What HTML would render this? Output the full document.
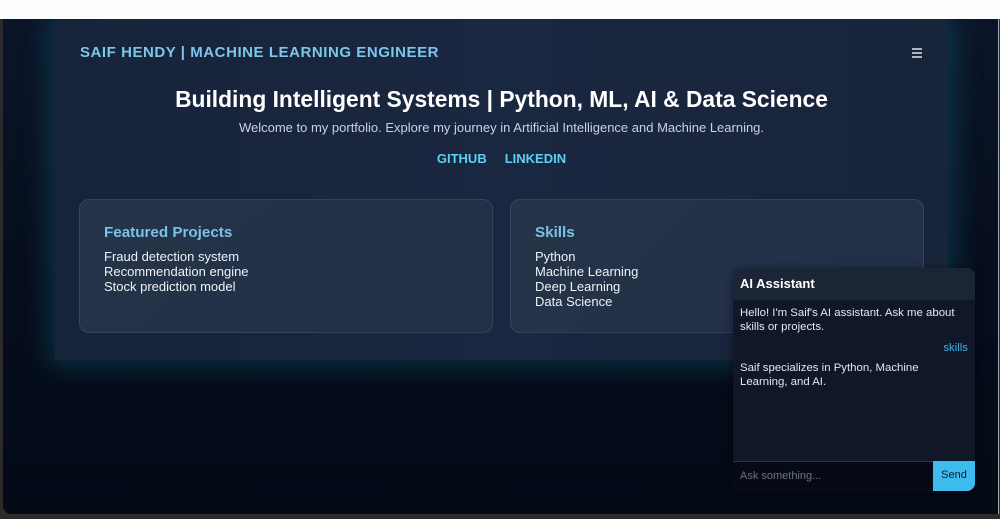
<!DOCTYPE html>
<html><head><style>
*{margin:0;padding:0;box-sizing:border-box}
body{width:1000px;height:519px;overflow:hidden;background:#2b2b2b;font-family:"Liberation Sans",Arial,sans-serif;position:relative}
.top{position:absolute;left:0;top:0;width:1000px;height:19px;background:#fbfdfe}
.frame{position:absolute;left:3px;top:19px;width:996px;height:495px;background:linear-gradient(180deg,#0b1528 0%,#060d1c 60%,#040a16 100%);border-radius:0 0 0 8px;overflow:hidden;border-right:1px solid #9aa;}
.main{position:absolute;left:52px;top:0;width:893px;height:341px;background:linear-gradient(90deg,#172339,#1a2740 50%,#18243a);box-shadow:0 0 25px 6px rgba(20,120,140,0.35);}
.brand{position:absolute;left:25px;top:25px;color:#7cc7ea;font-weight:bold;font-size:15px;letter-spacing:0.55px}
.menu{position:absolute;left:857px;top:29px;width:10px}
.menu i{display:block;height:2px;background:#aab6c6;margin-bottom:2px}
h1{position:absolute;left:0;width:100%;top:67px;text-align:center;color:#fff;font-size:22.8px;font-weight:bold}
.sub{position:absolute;left:0;width:100%;top:101px;text-align:center;color:#c9d3df;font-size:13px}
.links{position:absolute;left:0;width:100%;top:132px;text-align:center;color:#5fd0f0;font-weight:bold;font-size:13px}
.links span{margin:0 9px}
.card{position:absolute;top:180px;width:414px;height:134px;background:linear-gradient(135deg,#263449,#223048);border:1px solid #34435a;border-radius:10px;padding:24px 24px}
.card h3{color:#79c2e8;font-size:15.2px;margin-bottom:8px}
.card p{color:#eef2f6;font-size:13px;line-height:15px}
.chat{position:absolute;left:733px;top:268px;width:242px;height:223px;background:#0f1729;border-radius:8px 8px 8px 0;overflow:hidden;box-shadow:0 2px 10px rgba(0,0,0,.5)}
.ch{height:32px;background:#1b2536;color:#fff;font-weight:bold;font-size:13px;padding:8px 7px}
.msg{color:#e3e8ef;font-size:11.4px;line-height:14px;padding:0 7px}
.in{position:absolute;left:0;bottom:0;width:242px;height:30px;background:#050a16;border-top:1px solid #2a3446;color:#6b7383;font-size:11px;padding:8px 7px}
.send{position:absolute;right:0;bottom:0;width:42px;height:30px;background:#3fbcee;color:#0c1a2a;font-size:11px;text-align:center;line-height:29px;border-radius:0 0 6px 0}
</style></head><body>
<div class="top"></div>
<div class="frame">
<div class="main">
<div class="brand">SAIF HENDY | MACHINE LEARNING ENGINEER</div>
<div class="menu"><i></i><i></i><i></i></div>
<h1>Building Intelligent Systems | Python, ML, AI &amp; Data Science</h1>
<div class="sub">Welcome to my portfolio. Explore my journey in Artificial Intelligence and Machine Learning.</div>
<div class="links"><span>GITHUB</span><span>LINKEDIN</span></div>
<div class="card" style="left:24px"><h3>Featured Projects</h3><p>Fraud detection system<br>Recommendation engine<br>Stock prediction model</p></div>
<div class="card" style="left:455px"><h3>Skills</h3><p>Python<br>Machine Learning<br>Deep Learning<br>Data Science</p></div>
</div>
</div>
<div class="chat">
<div class="ch">AI Assistant</div>
<div class="msg" style="margin-top:6px">Hello! I'm Saif's AI assistant. Ask me about skills or projects.</div>
<div class="msg" style="text-align:right;color:#3fb0e0;margin-top:7px">skills</div>
<div class="msg" style="margin-top:6px">Saif specializes in Python, Machine<br>Learning, and AI.</div>
<div class="in">Ask something...</div>
<div class="send">Send</div>
</div>
</body></html>
